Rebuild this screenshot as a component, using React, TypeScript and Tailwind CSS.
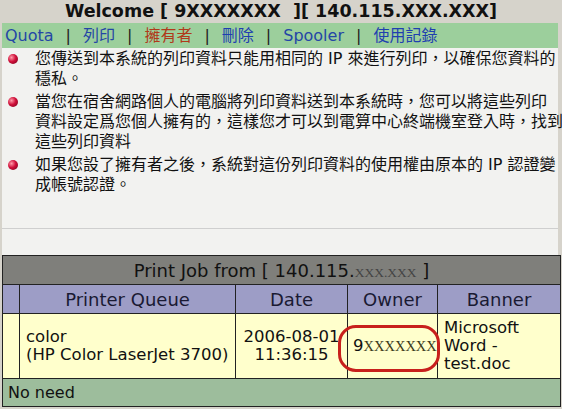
import React from "react";

const sans = "font-['DejaVu_Sans','Noto_Sans_CJK_TC',sans-serif]";
const serif = "font-['Liberation_Serif',serif]";

const Bullet: React.FC = () => (
  <span className="mt-[5px] h-[10px] w-[10px] shrink-0 rounded-full bg-[radial-gradient(circle_at_35%_35%,#ff9aa8_0%,#d0103a_45%,#70001a_100%)]" />
);

const notes: string[][] = [
  ["您傳送到本系統的列印資料只能用相同的 IP 來進行列印，以確保您資料的", "穩私。"],
  [
    "當您在宿舍網路個人的電腦將列印資料送到本系統時，您可以將這些列印",
    "資料設定爲您個人擁有的，這樣您才可以到電算中心終端機室登入時，找到",
    "這些列印資料",
  ],
  ["如果您設了擁有者之後，系統對這份列印資料的使用權由原本的 IP 認證變", "成帳號認證。"],
];

const navItems = [
  { label: "Quota", color: "text-[#2446a6]" },
  { label: "列印", color: "text-[#2446a6]" },
  { label: "擁有者", color: "text-[#b03a1a]" },
  { label: "刪除", color: "text-[#1f3fb0]" },
  { label: "Spooler", color: "text-[#2446a6]" },
  { label: "使用記錄", color: "text-[#1f3fb0]" },
];

const App: React.FC = () => {
  return (
    <div className={`w-[562px] h-[409px] overflow-hidden bg-[#d6d3cb] ${sans}`}>
      <div className="h-[23px] flex items-center justify-center text-[17.5px] font-bold text-[#111] leading-none whitespace-pre">
        Welcome [ 9XXXXXXX  ][ 140.115.XXX.XXX]
      </div>
      <div className="h-[25px] ml-[2px] mr-[4px] bg-[#9ccf9c] flex items-center pl-[3px] text-[16px] leading-none">
        {navItems.map((n, i) => (
          <React.Fragment key={n.label}>
            {i > 0 && <span className="mx-[12px] text-[#222]">|</span>}
            <span className={n.color}>{n.label}</span>
          </React.Fragment>
        ))}
      </div>
      <div className="ml-[2px] mr-[4px] bg-[#f2f2f0]">
        <div className="h-[181px] pt-[1px] pl-[6px] border-b border-[#cfcfcf] text-[16px] text-[#111] leading-[20px]">
          {notes.map((lines, i) => (
            <div key={i} className="flex gap-[17px] mb-[3px]">
              <Bullet />
              <div>
                {lines.map((l, j) => (
                  <div key={j} className="whitespace-nowrap">{l}</div>
                ))}
              </div>
            </div>
          ))}
        </div>
        <div className="h-[26px]" />
      </div>
      <div className="relative ml-[2px]">
        <table className="w-[558px] border-collapse border border-[#222] text-[16.5px] text-[#111] table-fixed">
          <colgroup>
            <col className="w-[17px]" />
            <col className="w-[216px]" />
            <col className="w-[112px]" />
            <col className="w-[90px]" />
            <col className="w-[123px]" />
          </colgroup>
          <tbody>
            <tr className="h-[29px] bg-[#7f7f7b] text-[18px]">
              <td colSpan={5} className="text-center text-[#111] border border-[#222]">
                Print Job from [ 140.115.<span className={`${serif} text-[13.5px] text-[#444]`}>XXX.XXX</span> ]
              </td>
            </tr>
            <tr className="h-[29px] bg-[#9d9dc6] text-[#1a1a33] text-[18px]">
              <td className="border border-[#222]" />
              <td className="border border-[#222] text-center">Printer Queue</td>
              <td className="border border-[#222] text-center">Date</td>
              <td className="border border-[#222] text-center">Owner</td>
              <td className="border border-[#222] text-center">Banner</td>
            </tr>
            <tr className="h-[65px] bg-[#ffffcc] leading-[18px]">
              <td className="border border-[#222]" />
              <td className="border border-[#222] pl-[6px]">
                color
                <br />
                (HP Color LaserJet 3700)
              </td>
              <td className="border border-[#222] text-center">
                2006-08-01
                <br />
                11:36:15
              </td>
              <td className="border border-[#222] pl-[5px] whitespace-nowrap">
                9<span className={`${serif} text-[14.5px] text-[#3a3a1a]`}>XXXXXXX</span>
              </td>
              <td className="border border-[#222] pl-[6px]">
                Microsoft
                <br />
                Word -
                <br />
                test.doc
              </td>
            </tr>
            <tr className="h-[28px] bg-[#9dbd9c] text-[16px]">
              <td colSpan={5} className="border border-[#222] pl-[5px]">No need</td>
            </tr>
          </tbody>
        </table>
        <div className="absolute left-[336px] top-[70px] w-[102px] h-[47px] rounded-[18px] border-[3px] border-[#c8201c]" />
      </div>
    </div>
  );
};

export default App;
